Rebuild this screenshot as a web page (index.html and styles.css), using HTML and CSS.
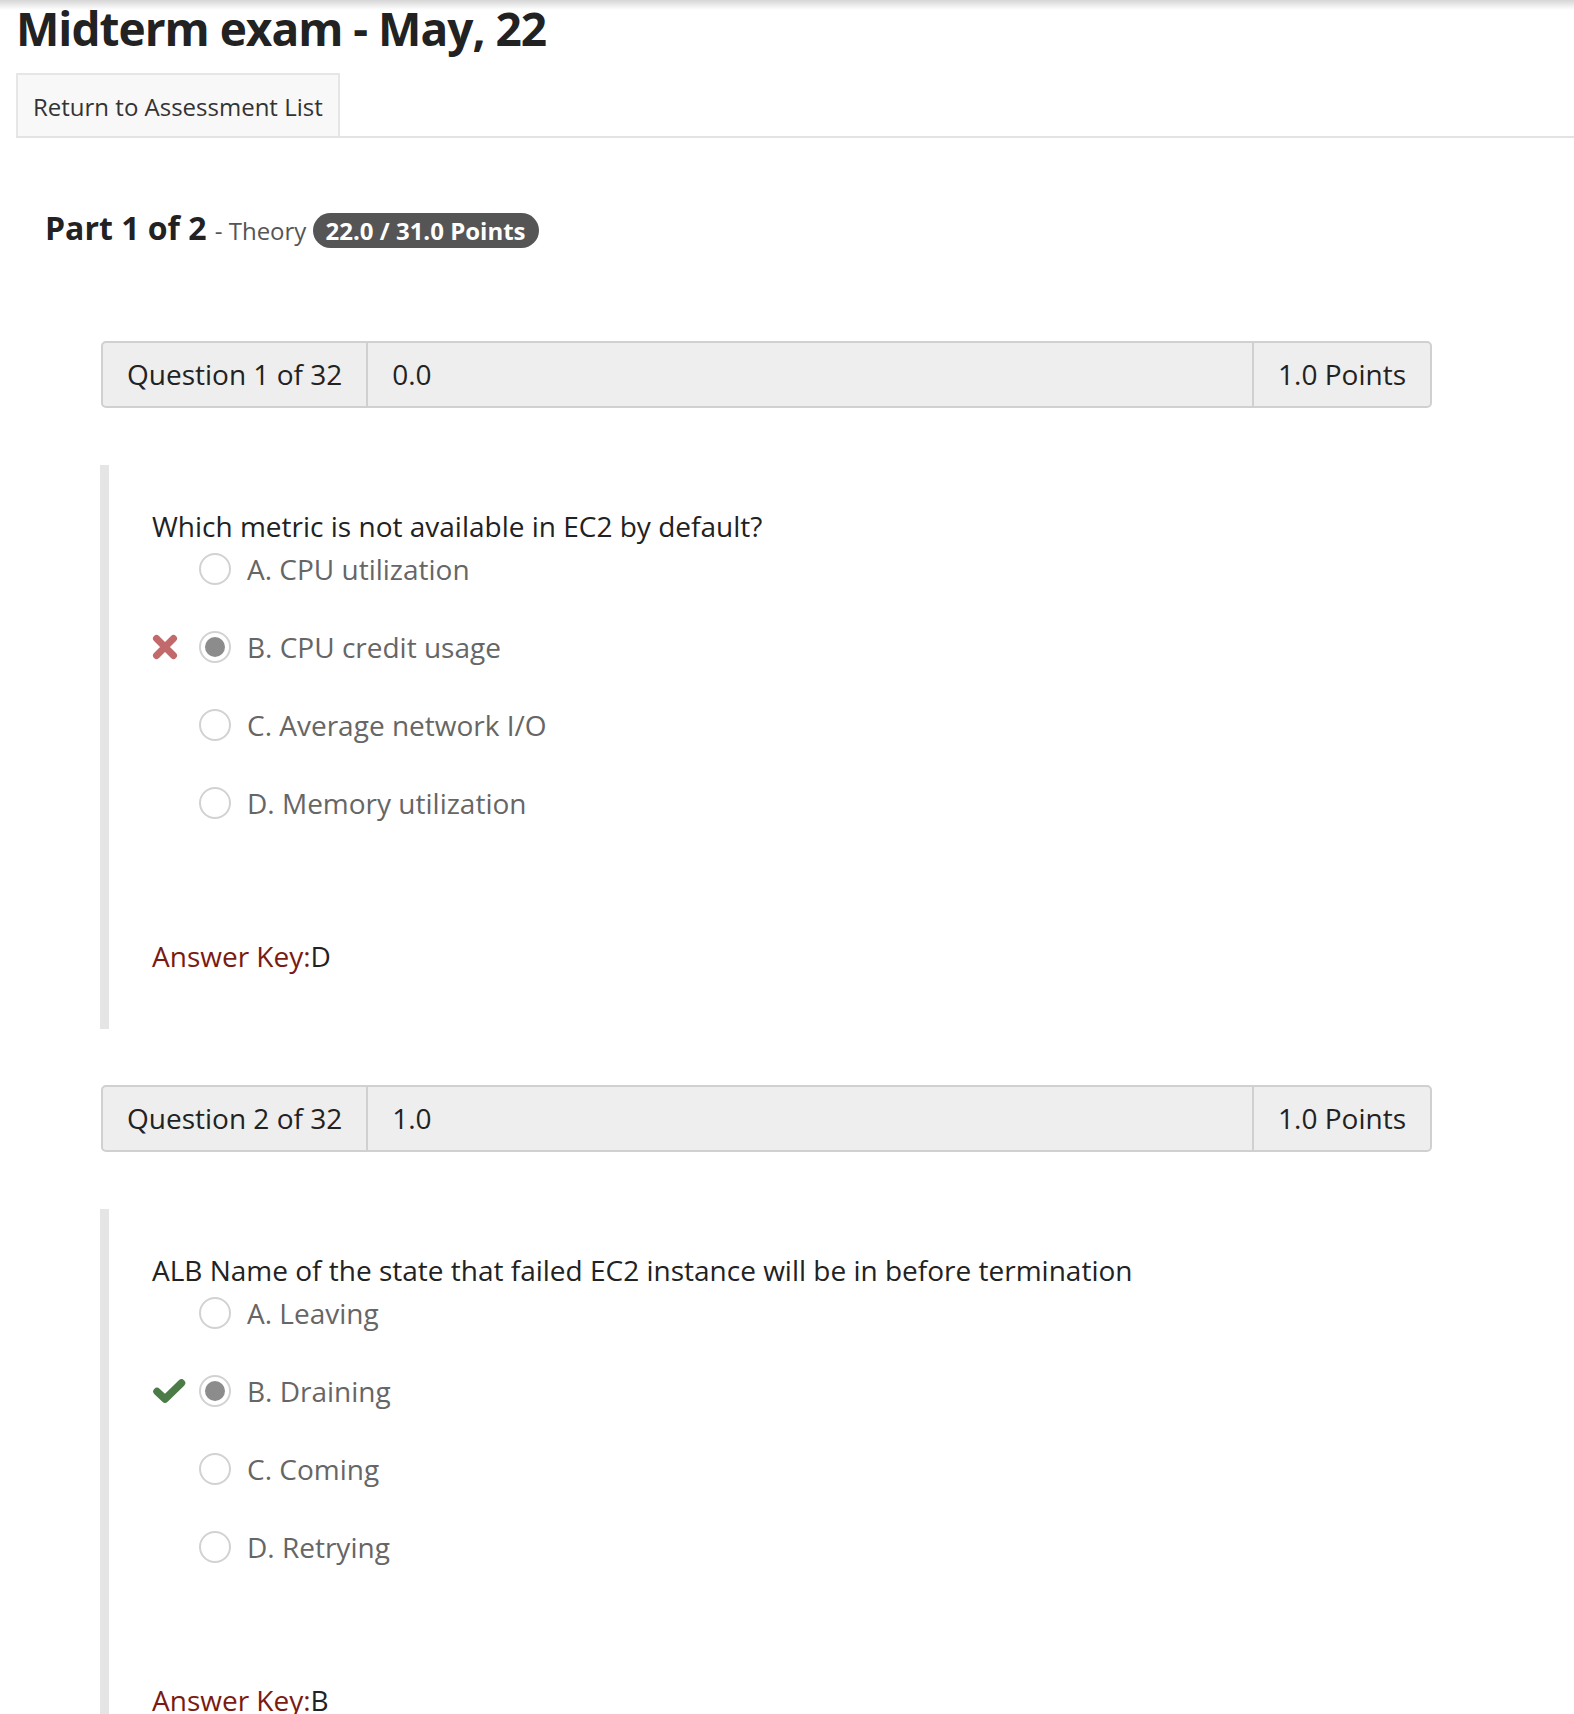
FILE: index.html
```html
<!DOCTYPE html>
<html lang="en">
<head>
<meta charset="utf-8">
<title>Midterm exam - May, 22</title>
<link rel="stylesheet" href="styles.css">
</head>
<body>
<div class="shade"></div>
<div class="page">
  <h1 class="title">Midterm exam - May, 22</h1>
  <div class="tabs">
    <a class="tab" href="#">Return to Assessment List</a>
  </div>

  <div class="part">
    <span class="part-num">Part 1 of 2</span>
    <span class="part-name">- Theory</span>
    <span class="badge">22.0 / 31.0 Points</span>
  </div>

  <div class="questions">
    <div class="qhead">
      <div class="qcell qnum">Question 1 of 32</div>
      <div class="qcell qscore">0.0</div>
      <div class="qcell qpoints">1.0 Points</div>
    </div>
    <div class="qbody">
      <div class="qtext">Which metric is not available in EC2 by default?</div>
      <div class="options">
        <div class="opt"><span class="mark"></span><span class="radio"></span><span class="otext">A. CPU utilization</span></div>
        <div class="opt"><span class="mark"><svg class="ico-x" viewBox="0 0 26 26" width="26" height="26"><path d="M4.5 4.5 L21.5 21.5 M21.5 4.5 L4.5 21.5" stroke="#c26a6b" stroke-width="7" stroke-linecap="round" fill="none"/></svg></span><span class="radio checked"></span><span class="otext">B. CPU credit usage</span></div>
        <div class="opt"><span class="mark"></span><span class="radio"></span><span class="otext">C. Average network I/O</span></div>
        <div class="opt"><span class="mark"></span><span class="radio"></span><span class="otext">D. Memory utilization</span></div>
      </div>
      <div class="akey"><span class="akey-label">Answer Key:</span>D</div>
    </div>

    <div class="qhead">
      <div class="qcell qnum">Question 2 of 32</div>
      <div class="qcell qscore">1.0</div>
      <div class="qcell qpoints">1.0 Points</div>
    </div>
    <div class="qbody">
      <div class="qtext">ALB Name of the state that failed EC2 instance will be in before termination</div>
      <div class="options">
        <div class="opt"><span class="mark"></span><span class="radio"></span><span class="otext">A. Leaving</span></div>
        <div class="opt"><span class="mark"><svg class="ico-check" viewBox="0 0 34 26" width="34" height="26"><path d="M5 13.5 L13 21 L29.5 5" stroke="#4b7b46" stroke-width="7.5" stroke-linecap="round" stroke-linejoin="round" fill="none"/></svg></span><span class="radio checked"></span><span class="otext">B. Draining</span></div>
        <div class="opt"><span class="mark"></span><span class="radio"></span><span class="otext">C. Coming</span></div>
        <div class="opt"><span class="mark"></span><span class="radio"></span><span class="otext">D. Retrying</span></div>
      </div>
      <div class="akey"><span class="akey-label">Answer Key:</span>B</div>
    </div>
  </div>
</div>
</body>
</html>
```

FILE: styles.css
```css
html, body {
  margin: 0;
  padding: 0;
  background: #ffffff;
}
body {
  font-family: "Open Sans", "Noto Sans", "Liberation Sans", sans-serif;
  color: #222222;
}
.shade {
  position: fixed;
  left: 0;
  top: 0;
  right: 0;
  height: 10px;
  background: linear-gradient(to bottom, rgba(0,0,0,0.16), rgba(0,0,0,0));
  pointer-events: none;
}
.page {
  padding-left: 16px;
}
.title {
  margin: 0;
  font-size: 46px;
  line-height: 56px;
  letter-spacing: -1px;
  font-weight: 700;
  color: #222;
}
.tabs {
  margin-top: 17px;
  border-bottom: 2px solid #e3e3e3;
  display: flex;
}
.tab {
  display: block;
  border: 2px solid #e6e6e6;
  border-bottom: none;
  background: #f8f8f8;
  color: #333;
  text-decoration: none;
  font-size: 24px;
  line-height: 33px;
  padding: 15px 15px 13px 15px;
}
.part {
  margin-top: 70px;
  margin-left: 29px;
  line-height: 40px;
}
.part-num {
  font-size: 32px;
  font-weight: 700;
  color: #222;
}
.part-name {
  font-size: 24px;
  color: #555;
  margin-left: 4px;
}
.badge {
  display: inline-block;
  background: #555555;
  color: #fff;
  font-weight: 700;
  font-size: 24px;
  line-height: 35px;
  padding: 0 13px;
  border-radius: 18px;
  margin-left: 2px;
}
.questions {
  margin-top: 87px;
  padding-left: 85px;
  padding-right: 142px;
}
.qhead {
  display: flex;
  background: #eeeeee;
  border: 2px solid #d0d0d0;
  border-radius: 5px;
  font-size: 28px;
  line-height: 63px;
  color: #222;
}
.qcell {
  padding: 0 24px;
}
.qnum {
  border-right: 2px solid #d0d0d0;
}
.qscore {
  flex: 1;
}
.qpoints {
  border-left: 2px solid #d0d0d0;
}
.qbody {
  margin: 57px 0 56px -1px;
  border-left: 9px solid #e5e5e5;
  padding: 44px 0 56px 43px;
}
.qtext {
  font-size: 28px;
  line-height: 34px;
  color: #222;
}
.options {
  margin-top: 9px;
  display: flex;
  flex-direction: column;
  gap: 44px;
}
.opt {
  display: flex;
  align-items: center;
  height: 34px;
}
.mark {
  width: 47px;
  display: flex;
  align-items: center;
}
.radio {
  width: 32px;
  height: 32px;
  box-sizing: border-box;
  border: 2px solid #d2d2d2;
  border-radius: 50%;
  background: #fff;
  display: flex;
  align-items: center;
  justify-content: center;
}
.radio.checked::after {
  content: "";
  width: 20px;
  height: 20px;
  border-radius: 50%;
  background: #8c8c8c;
}
.otext {
  margin-left: 16px;
  font-size: 28px;
  line-height: 34px;
  color: #666;
}
.akey {
  margin-top: 119px;
  font-size: 28px;
  line-height: 34px;
  color: #222;
}
.akey-label {
  color: #7b1a12;
}
```
